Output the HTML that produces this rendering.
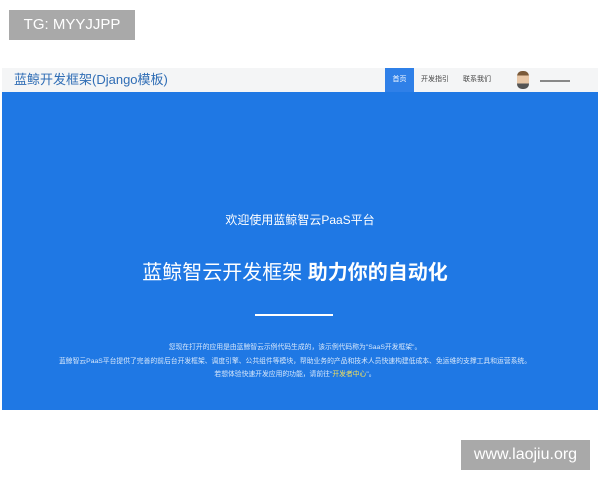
<!DOCTYPE html>
<html><head><meta charset="utf-8"><style>
body{margin:0;width:600px;height:480px;background:#fff;position:relative;overflow:hidden;font-family:"Liberation Sans","Noto Sans CJK SC",sans-serif}
.a{position:absolute}
</style></head><body>
<div class="a" style="left:9px;top:10px;width:126px;height:30px;background:#a9a9a9;color:#fff;font-size:15px;line-height:30px;text-align:center">TG: MYYJJPP</div>
<div class="a" style="left:2px;top:68px;width:596px;height:24px;background:#f4f5f6"></div>
<div class="a" style="left:14px;top:70px;font-size:13px;line-height:20px;color:#2f6db5">蓝鲸开发框架(Django模板)</div>
<div class="a" style="left:385px;top:68px;width:29px;height:24px;background:#2f80e8;color:#fff;font-size:7px;line-height:24px;text-align:center">首页</div>
<div class="a" style="left:421px;top:68px;font-size:7px;line-height:24px;color:#444">开发指引</div>
<div class="a" style="left:463px;top:68px;font-size:7px;line-height:24px;color:#444">联系我们</div>
<div class="a" style="left:517px;top:71px;width:12px;height:18px;border-radius:5px;background:linear-gradient(#7a5a3a 0 25%,#e8c7a7 25% 70%,#555 70%)"></div>
<div class="a" style="left:540px;top:80px;width:30px;height:2px;background:#888"></div>
<div class="a" style="left:2px;top:92px;width:596px;height:318px;background:#1f78e4"></div>
<div class="a" style="left:0;top:211px;width:600px;text-align:center;color:#fff;font-size:12px">欢迎使用蓝鲸智云PaaS平台</div>
<div class="a" style="left:-5px;top:259px;width:600px;text-align:center;color:#fff;font-size:20px;line-height:28px">蓝鲸智云开发框架 <b>助力你的自动化</b></div>
<div class="a" style="left:255px;top:314px;width:78px;height:2px;background:#fff"></div>
<div class="a" style="left:0;top:341px;width:590px;text-align:center;color:#d8e8fb;font-size:6.8px;line-height:13.5px">您现在打开的应用是由蓝鲸智云示例代码生成的，该示例代码称为"SaaS开发框架"。<br>蓝鲸智云PaaS平台提供了完善的前后台开发框架、调度引擎、公共组件等模块，帮助业务的产品和技术人员快速构建低成本、免运维的支撑工具和运营系统。<br>若想体验快速开发应用的功能，请前往"<span style="color:#f5e15a">开发者中心</span>"。</div>
<div class="a" style="left:461px;top:440px;width:129px;height:30px;background:#a9a9a9;color:#fff;font-size:16px;line-height:30px;text-align:center">www.laojiu.org</div>
</body></html>
